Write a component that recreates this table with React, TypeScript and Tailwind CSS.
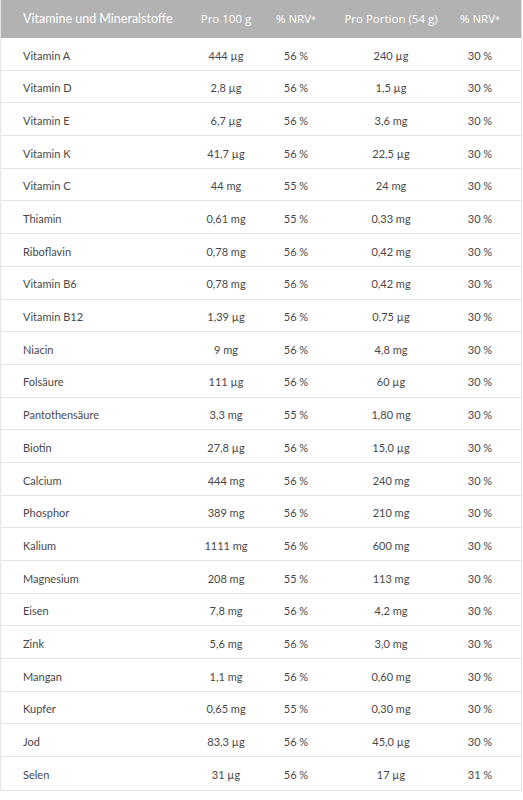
const rows: [string, string, string, string, string][] = [
  ['Vitamin A', '444 µg', '56 %', '240 µg', '30 %'],
  ['Vitamin D', '2,8 µg', '56 %', '1,5 µg', '30 %'],
  ['Vitamin E', '6,7 µg', '56 %', '3,6 mg', '30 %'],
  ['Vitamin K', '41,7 µg', '56 %', '22,5 µg', '30 %'],
  ['Vitamin C', '44 mg', '55 %', '24 mg', '30 %'],
  ['Thiamin', '0,61 mg', '55 %', '0,33 mg', '30 %'],
  ['Riboflavin', '0,78 mg', '56 %', '0,42 mg', '30 %'],
  ['Vitamin B6', '0,78 mg', '56 %', '0,42 mg', '30 %'],
  ['Vitamin B12', '1,39 µg', '56 %', '0,75 µg', '30 %'],
  ['Niacin', '9 mg', '56 %', '4,8 mg', '30 %'],
  ['Folsäure', '111 µg', '56 %', '60 µg', '30 %'],
  ['Pantothensäure', '3,3 mg', '55 %', '1,80 mg', '30 %'],
  ['Biotin', '27,8 µg', '56 %', '15,0 µg', '30 %'],
  ['Calcium', '444 mg', '56 %', '240 mg', '30 %'],
  ['Phosphor', '389 mg', '56 %', '210 mg', '30 %'],
  ['Kalium', '1111 mg', '56 %', '600 mg', '30 %'],
  ['Magnesium', '208 mg', '55 %', '113 mg', '30 %'],
  ['Eisen', '7,8 mg', '56 %', '4,2 mg', '30 %'],
  ['Zink', '5,6 mg', '56 %', '3,0 mg', '30 %'],
  ['Mangan', '1,1 mg', '56 %', '0,60 mg', '30 %'],
  ['Kupfer', '0,65 mg', '55 %', '0,30 mg', '30 %'],
  ['Jod', '83,3 µg', '56 %', '45,0 µg', '30 %'],
  ['Selen', '31 µg', '56 %', '17 µg', '31 %'],
];

export default function App() {
  return (
    <div className="w-[523px] bg-white font-['Lato',sans-serif] text-[11px] text-[#484848]">
      <div className="w-[522px] border-x border-b border-[#e4e4e4]">
        {/* header */}
        <div className="flex h-[38px] items-center bg-[#b2b2b2] text-white">
          <div className="w-[192px] pl-[22px] text-[12.5px]">Vitamine und Mineralstoffe</div>
          <div className="w-[66px] text-center font-['Open_Sans',sans-serif] text-[11.5px]">Pro 100 g</div>
          <div className="w-[74px] text-center font-['Open_Sans',sans-serif] text-[11.5px]">
            % NRV<span className="text-[9px]">*</span>
          </div>
          <div className="w-[116px] text-center font-['Open_Sans',sans-serif] text-[11.5px]">Pro Portion (54 g)</div>
          <div className="w-[62px] text-center font-['Open_Sans',sans-serif] text-[11.5px]">
            % NRV<span className="text-[9px]">*</span>
          </div>
        </div>

        {rows.map((r, i) => (
          <div
            key={r[0]}
            className={`flex h-[32.7px] items-center pt-[4px] ${i < rows.length - 1 ? 'border-b border-[#e4e4e4]' : ''}`}
          >
            <div className="w-[192px] pl-[22px]">{r[0]}</div>
            <div className="w-[66px] text-center">{r[1]}</div>
            <div className="w-[74px] text-center">{r[2]}</div>
            <div className="w-[116px] text-center">{r[3]}</div>
            <div className="w-[62px] text-center">{r[4]}</div>
          </div>
        ))}
      </div>
    </div>
  );
}
